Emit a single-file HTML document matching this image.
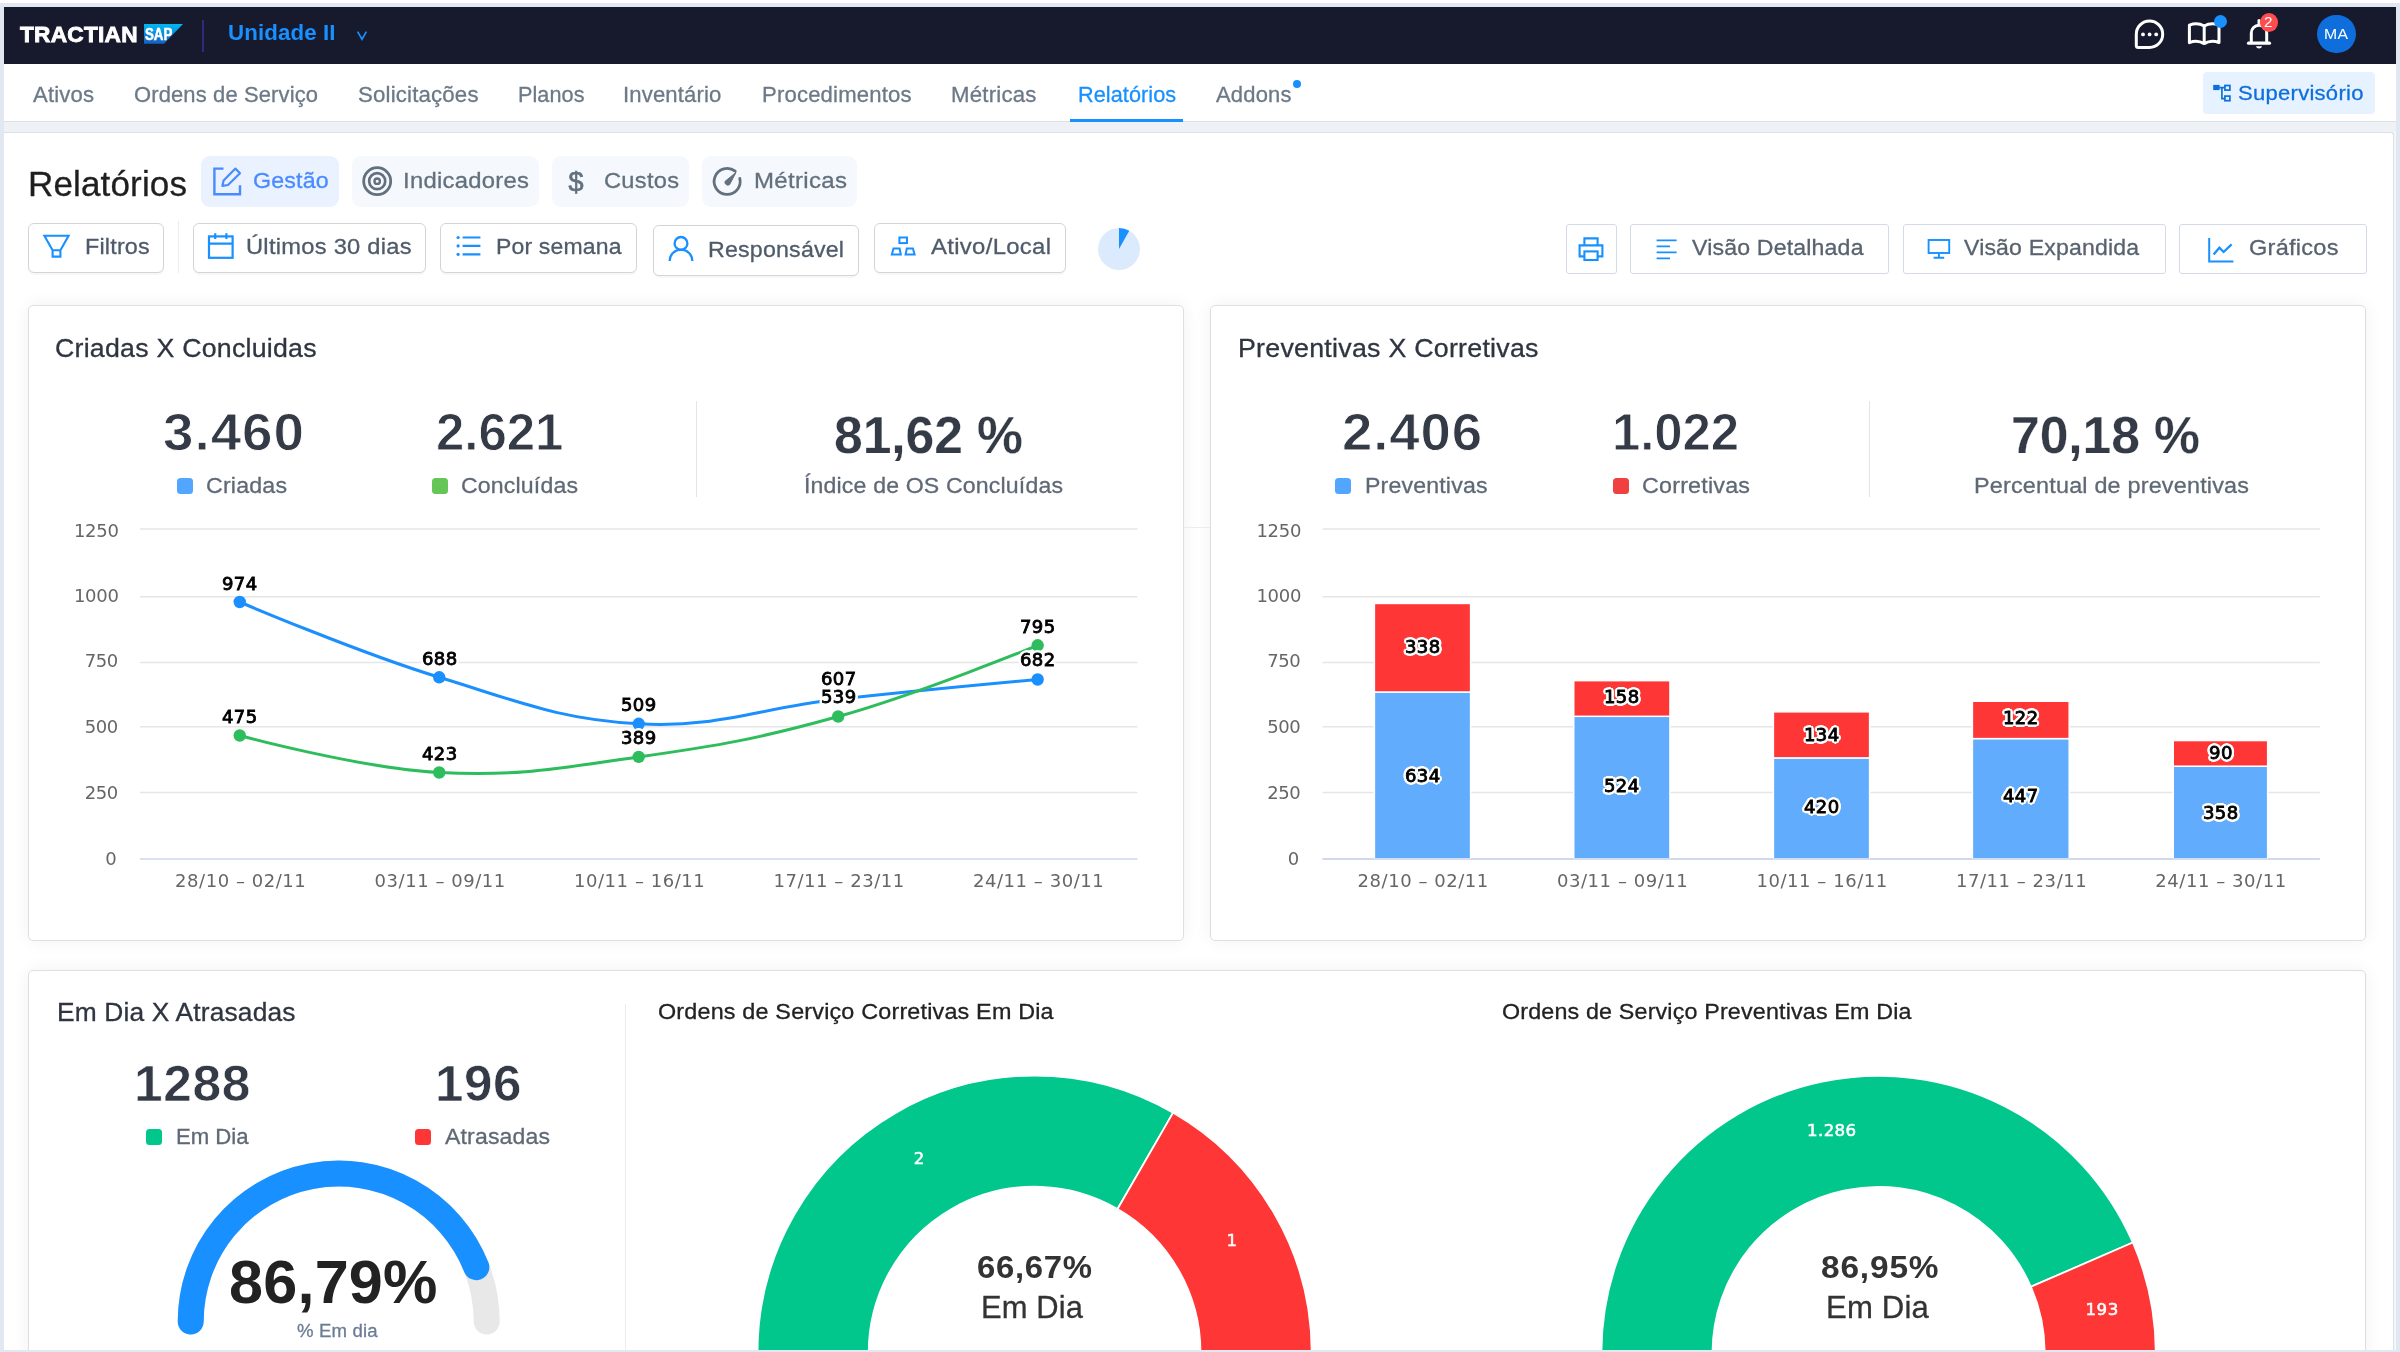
<!DOCTYPE html>
<html lang="pt-BR"><head><meta charset="utf-8"><title>Relatórios</title>
<style>
*{box-sizing:border-box;margin:0;padding:0}
html,body{width:2400px;height:1352px;overflow:hidden}
body{background:#e2e8f1;font-family:"Liberation Sans",sans-serif;position:relative}
div,span,header,nav,main,section,button,svg,h1,h2,i{position:absolute;display:block}
.t{white-space:nowrap;line-height:1;font-weight:400;-webkit-text-stroke:0.3px;transform-origin:0 50%}
button{background:#fff;border:1.5px solid #d4d4d4;border-radius:6px;box-shadow:0 2px 0 rgba(0,0,0,.03);font:inherit}
.pill{border-radius:9px;background:#f5f8fc}
.card{background:#fff;border:1.5px solid #dfdfdf;border-radius:5px;box-shadow:0 0 18px rgba(0,0,0,.06)}
.lg{border-radius:3.5px}
.g{left:0;top:0;width:0;height:0}
.b{-webkit-text-stroke:0}
.wl{-webkit-text-stroke:0.55px #fff}
.dl{-webkit-text-stroke:0.8px #000;font-weight:400;text-shadow:2.60px 0.00px 0 #fff,2.40px 0.99px 0 #fff,1.84px 1.84px 0 #fff,0.99px 2.40px 0 #fff,0.00px 2.60px 0 #fff,-0.99px 2.40px 0 #fff,-1.84px 1.84px 0 #fff,-2.40px 0.99px 0 #fff,-2.60px 0.00px 0 #fff,-2.40px -0.99px 0 #fff,-1.84px -1.84px 0 #fff,-0.99px -2.40px 0 #fff,-0.00px -2.60px 0 #fff,0.99px -2.40px 0 #fff,1.84px -1.84px 0 #fff,2.40px -0.99px 0 #fff,1.60px 0.00px 0 #fff,1.13px 1.13px 0 #fff,0.00px 1.60px 0 #fff,-1.13px 1.13px 0 #fff,-1.60px 0.00px 0 #fff,-1.13px -1.13px 0 #fff,-0.00px -1.60px 0 #fff,1.13px -1.13px 0 #fff}
</style></head>
<body>
<div id="app" style="left:0;top:0;width:2400px;height:1352px;will-change:transform">
<div style="left:0px;top:0px;width:2400px;height:3.3px;background:#fff"></div>
<header class="g">
<div style="left:4px;top:7.2px;width:2392px;height:56.8px;background:#17192d"></div>
<span class="t b" style="top:23.80px;font-size:21.8px;color:#fff;font-weight:700;transform:scaleX(1.0390);letter-spacing:0.256px;left:19.90px;-webkit-text-stroke:0.85px #fff;">TRACTIAN</span>
<svg style="left:144px;top:24px" width="40" height="20" viewBox="0 0 40 20" ><defs><linearGradient id="sg" x1="0" y1="0" x2="0" y2="1"><stop offset="0" stop-color="#00b8f1"/><stop offset=".25" stop-color="#06a5e5"/><stop offset=".6" stop-color="#0d7fd6"/><stop offset="1" stop-color="#1661be"/></linearGradient></defs><path d="M0 0H39L20 19.7H0Z" fill="url(#sg)"/><text x="0.9" y="15.7" font-family="Liberation Sans, sans-serif" font-weight="700" font-size="15.8" fill="#fff" stroke="#fff" stroke-width=".5" textLength="27.4" lengthAdjust="spacingAndGlyphs">SAP</text></svg>
<div style="left:202.4px;top:20px;width:1.6px;height:32px;background:#2d2b7a"></div>
<span class="t b" style="top:21.90px;font-size:21.8px;color:#1890ff;font-weight:700;transform:scaleX(1.0225);letter-spacing:0.109px;left:227.50px;">Unidade II</span>
<svg style="left:356px;top:30px" width="12" height="11" viewBox="0 0 12 11" ><path d="M1.6 1.6L6 9.2L10.4 1.6" fill="none" stroke="#1890ff" stroke-width="1.7"/></svg>
<svg style="left:2132px;top:17px" width="36" height="34" viewBox="0 0 36 34" ><path d="M4.3 17.2A13.2 13.2 0 1 1 17.5 30.4H6.3A2 2 0 0 1 4.3 28.4Z" fill="none" stroke="#fff" stroke-width="3" stroke-linejoin="round"/><circle cx="11" cy="17.4" r="1.9" fill="#fff"/><circle cx="17.6" cy="17.4" r="1.9" fill="#fff"/><circle cx="24.2" cy="17.4" r="1.9" fill="#fff"/></svg>
<svg style="left:2186px;top:20px" width="38" height="28" viewBox="0 0 38 28" ><path d="M3.4 5.2C8 3.4 13.5 3.4 18.2 6C22.9 3.4 28.4 3.4 33 5.2V22.6C28.4 20.8 22.9 20.8 18.2 23.6C13.5 20.8 8 20.8 3.4 22.6Z M18.2 6V23.6" fill="none" stroke="#fff" stroke-width="3" stroke-linejoin="round"/></svg>
<div style="left:2213.9px;top:14.8px;width:13px;height:13px;background:#1890ff;border-radius:50%"></div>
<svg style="left:2244px;top:17px" width="30" height="34" viewBox="0 0 30 34" ><path d="M7.3 25.6V15.9A7.7 7.7 0 0 1 22.7 15.9V25.6" fill="none" stroke="#fff" stroke-width="3"/><path d="M15 7.4V3.6" stroke="#fff" stroke-width="3" stroke-linecap="round"/><path d="M4.5 26.2H25.5" stroke="#fff" stroke-width="3.2" stroke-linecap="round"/><path d="M11.9 29.2A3.2 3.2 0 0 0 18.1 29.2Z" fill="#fff"/></svg>
<div style="left:2259.9px;top:13.2px;width:18.2px;height:19px;background:#ff4d4f;border-radius:50%"></div>
<span class="t b" style="top:14.10px;font-size:15.2px;color:#fff;left:2264.07px;">2</span>
<div style="left:2316.9px;top:14.7px;width:38.7px;height:38.7px;background:#0e6fdc;border-radius:50%"></div>
<span class="t b" style="top:25.70px;font-size:15.3px;color:#fff;transform:scaleX(1.0289);letter-spacing:0.276px;left:2324.25px;">MA</span>
</header>
<nav class="g">
<div style="left:4px;top:64px;width:2392px;height:58px;background:#fff;border-bottom:1.5px solid #dce1e7"></div>
<span class="t" style="top:84.70px;font-size:21.4px;color:#6c7987;transform:scaleX(1.0330);letter-spacing:0.160px;left:33.00px;">Ativos</span>
<span class="t" style="top:84.70px;font-size:21.4px;color:#6c7987;transform:scaleX(1.0270);letter-spacing:0.125px;left:134.00px;">Ordens de Serviço</span>
<span class="t" style="top:84.70px;font-size:21.4px;color:#6c7987;transform:scaleX(1.0390);letter-spacing:0.167px;left:357.50px;">Solicitações</span>
<span class="t" style="top:84.70px;font-size:21.4px;color:#6c7987;transform:scaleX(1.0117);letter-spacing:0.065px;left:517.50px;">Planos</span>
<span class="t" style="top:84.70px;font-size:21.4px;color:#6c7987;transform:scaleX(1.0331);letter-spacing:0.143px;left:623.30px;">Inventário</span>
<span class="t" style="top:84.70px;font-size:21.4px;color:#6c7987;transform:scaleX(1.0334);letter-spacing:0.165px;left:762.00px;">Procedimentos</span>
<span class="t" style="top:84.70px;font-size:21.4px;color:#6c7987;transform:scaleX(1.0405);letter-spacing:0.192px;left:951.30px;">Métricas</span>
<span class="t" style="top:84.70px;font-size:21.4px;color:#1890ff;transform:scaleX(1.0137);letter-spacing:0.062px;left:1077.50px;">Relatórios</span>
<span class="t" style="top:84.70px;font-size:21.4px;color:#6c7987;transform:scaleX(1.0283);letter-spacing:0.171px;left:1215.50px;">Addons</span>
<div style="left:1070px;top:119.2px;width:112.5px;height:2.9px;background:#1890ff"></div>
<div style="left:1293px;top:80px;width:8.4px;height:8.4px;background:#1890ff;border-radius:50%"></div>
<div style="left:2203px;top:72px;width:172px;height:42.1px;background:#e6f2ff;border-radius:4px"></div>
<svg style="left:2212px;top:84px" width="20" height="20" viewBox="0 0 20 20" ><rect x="1.2" y="0.9" width="6.4" height="5.2" fill="#0d6fdc"/><path d="M7.4 3.6H12.4 M9.9 3.6V14.6H12.4" fill="none" stroke="#0d6fdc" stroke-width="1.7"/><rect x="12.9" y="1.5" width="5" height="4.6" fill="none" stroke="#0d6fdc" stroke-width="1.7"/><rect x="12.9" y="12.1" width="5" height="4.6" fill="none" stroke="#0d6fdc" stroke-width="1.7"/></svg>
<span class="t" style="top:83.10px;font-size:20.8px;color:#0d6fdc;transform:scaleX(1.0594);letter-spacing:0.252px;left:2238.00px;">Supervisório</span>
</nav>
<div style="left:4px;top:122px;width:2392px;height:10.5px;background:#eef1f6"></div>
<main class="g">
<div style="left:4px;top:132px;width:2390px;height:1218px;background:#fff;border:1.5px solid #dce1e7;border-bottom:0;border-left:0;border-radius:0 4px 0 0"></div>
<div style="left:2394px;top:132px;width:2px;height:1218px;background:#f4f6fa"></div>
<div class="g">
<span class="t" style="top:166.60px;font-size:34.6px;color:#1f1f1f;transform:scaleX(1.0150);letter-spacing:0.109px;left:28.40px;">Relatórios</span>
<div class="pill" style="left:201.3px;top:156.2px;width:137.5px;height:50.8px;background:#e9f2fe"></div>
<div class="pill" style="left:351.5px;top:156.2px;width:187.6px;height:50.8px;"></div>
<div class="pill" style="left:552px;top:156.2px;width:137px;height:50.8px;"></div>
<div class="pill" style="left:701.5px;top:156.2px;width:155.4px;height:50.8px;"></div>
<svg style="left:211px;top:165px" width="32" height="32" viewBox="0 0 32 32" ><path d="M12.5 3.6H3.4V29.2H29V20.2" fill="none" stroke="#4a8aff" stroke-width="2.4"/><path d="M11.4 20.8L12.6 15.6L24.4 3.6L29 8.2L17 20L11.4 20.8Z" fill="none" stroke="#4a8aff" stroke-width="2.2" stroke-linejoin="round"/></svg>
<span class="t" style="top:169.80px;font-size:22.6px;color:#4a8aff;transform:scaleX(1.0263);letter-spacing:0.160px;left:253.40px;">Gestão</span>
<svg style="left:361px;top:165px" width="32" height="32" viewBox="0 0 32 32" ><circle cx="16.2" cy="16.2" r="13.5" fill="none" stroke="#63707d" stroke-width="2.8"/><circle cx="16.2" cy="16.2" r="8" fill="none" stroke="#63707d" stroke-width="2.7"/><circle cx="16.2" cy="16.2" r="2.7" fill="none" stroke="#63707d" stroke-width="2.4"/></svg>
<span class="t" style="top:169.80px;font-size:22.6px;color:#63707d;transform:scaleX(1.0551);letter-spacing:0.261px;left:403.00px;">Indicadores</span>
<span class="t" style="top:168.60px;font-size:27px;color:#63707d;left:568.50px;-webkit-text-stroke:0.7px;">$</span>
<span class="t" style="top:169.80px;font-size:22.6px;color:#63707d;transform:scaleX(1.0465);letter-spacing:0.268px;left:604.00px;">Custos</span>
<svg style="left:711px;top:165px" width="32" height="32" viewBox="0 0 32 32" ><path d="M24.2 6.2A13 13 0 1 0 28.8 13.4" fill="none" stroke="#63707d" stroke-width="2.8" stroke-linecap="round"/><path d="M14 16.4L25 7.4L18.6 19.6A3 3 0 0 1 14 16.4Z" fill="#63707d" stroke="#63707d" stroke-width="1" stroke-linejoin="round"/></svg>
<span class="t" style="top:169.80px;font-size:22.6px;color:#63707d;transform:scaleX(1.0625);letter-spacing:0.308px;left:753.50px;">Métricas</span>
<button style="left:27.8px;top:222.8px;width:136.6px;height:50.5px;"></button>
<svg style="left:42px;top:233px" width="30" height="27" viewBox="0 0 30 27" ><path d="M2.4 2.8H26.6L18.4 17.2V23.6H10.6V17.2Z M10.6 17.2H18.4" fill="none" stroke="#1890ff" stroke-width="2.1" stroke-linejoin="miter"/></svg>
<span class="t" style="top:236.30px;font-size:22.4px;color:#4f5b6a;transform:scaleX(1.0430);letter-spacing:0.180px;left:84.70px;">Filtros</span>
<div style="left:177.8px;top:221px;width:1.4px;height:51.5px;background:#ececec"></div>
<button style="left:192.5px;top:222.8px;width:233.8px;height:50.5px;"></button>
<svg style="left:206px;top:231px" width="30" height="30" viewBox="0 0 30 30" ><rect x="3" y="5.4" width="23.6" height="21.4" fill="none" stroke="#1890ff" stroke-width="2.2"/><path d="M3 12.6H26.6 M9.2 2.2V8 M20.4 2.2V8" fill="none" stroke="#1890ff" stroke-width="2.2"/></svg>
<span class="t" style="top:236.30px;font-size:22.4px;color:#4f5b6a;transform:scaleX(1.0573);letter-spacing:0.254px;left:246.30px;">Últimos 30 dias</span>
<button style="left:440px;top:222.8px;width:197px;height:50.5px;"></button>
<svg style="left:455px;top:234px" width="28" height="26" viewBox="0 0 28 26" ><path d="M7.6 3.5H25.4 M7.6 11.9H25.4 M7.6 20.3H25.4" stroke="#1890ff" stroke-width="2.2"/><circle cx="3.1" cy="3.5" r="1.6" fill="#1890ff"/><circle cx="3.1" cy="11.9" r="1.6" fill="#1890ff"/><circle cx="3.1" cy="20.3" r="1.6" fill="#1890ff"/></svg>
<span class="t" style="top:236.30px;font-size:22.4px;color:#4f5b6a;transform:scaleX(1.0276);letter-spacing:0.155px;left:495.70px;">Por semana</span>
<button style="left:652.5px;top:225.2px;width:206.5px;height:50.5px;"></button>
<svg style="left:666px;top:234px" width="30" height="30" viewBox="0 0 30 30" ><circle cx="15" cy="9.4" r="6.4" fill="none" stroke="#1890ff" stroke-width="2.3"/><path d="M3.6 27A11.4 11.4 0 0 1 26.4 27" fill="none" stroke="#1890ff" stroke-width="2.3"/></svg>
<span class="t" style="top:238.60px;font-size:22.4px;color:#4f5b6a;transform:scaleX(1.0354);letter-spacing:0.190px;left:707.70px;">Responsável</span>
<button style="left:874.4px;top:222.8px;width:191.2px;height:50.5px;"></button>
<svg style="left:889px;top:234px" width="28" height="26" viewBox="0 0 28 26" ><rect x="10.4" y="3.5" width="7.6" height="5.6" fill="none" stroke="#1890ff" stroke-width="2"/><path d="M2.8 20.5L4.5 14.5H10.6L11.8 20.5Z M16.6 20.5L17.8 14.5H23.9L25.6 20.5Z" fill="none" stroke="#1890ff" stroke-width="2"/></svg>
<span class="t" style="top:236.30px;font-size:22.4px;color:#4f5b6a;transform:scaleX(1.0669);letter-spacing:0.294px;left:930.50px;">Ativo/Local</span>
<svg style="left:1097.3px;top:226.8px" width="44" height="44" viewBox="0 0 44 44" ><circle cx="22" cy="22" r="21" fill="#dbebfd"/><path d="M22 22V1A21 21 0 0 1 32.3 3.7Z" fill="#1890ff"/></svg>
<button style="left:1565.6px;top:223.6px;width:51px;height:50px;border-color:#d5dbe6;border-radius:3px;box-shadow:none"></button>
<svg style="left:1577px;top:235px" width="28" height="28" viewBox="0 0 28 28" ><path d="M7.4 10.4V3.4H20.6V10.4" fill="none" stroke="#1890ff" stroke-width="2.1"/><path d="M7.4 21.4H2.6V10.4H25.4V21.4H20.6" fill="none" stroke="#1890ff" stroke-width="2.1"/><rect x="7.4" y="16.4" width="13.2" height="8.6" fill="none" stroke="#1890ff" stroke-width="2.1"/></svg>
<button style="left:1630px;top:223.6px;width:259.3px;height:50px;border-color:#d5dbe6;border-radius:3px;box-shadow:none"></button>
<svg style="left:1655px;top:237px" width="24" height="24" viewBox="0 0 24 24" ><path d="M1.6 3.4H21.6 M1.6 9.4H15 M1.6 15.4H21.6 M1.6 21.4H15" stroke="#1890ff" stroke-width="1.9"/></svg>
<span class="t" style="top:236.60px;font-size:22.4px;color:#58636f;transform:scaleX(1.0324);letter-spacing:0.157px;left:1691.50px;">Visão Detalhada</span>
<button style="left:1902.8px;top:223.6px;width:263.3px;height:50px;border-color:#d5dbe6;border-radius:3px;box-shadow:none"></button>
<svg style="left:1927px;top:238px" width="26" height="22" viewBox="0 0 26 22" ><rect x="1.6" y="2" width="20.6" height="13" fill="none" stroke="#1890ff" stroke-width="1.9"/><path d="M11.9 15V19.6 M6.6 19.8H17.2" stroke="#1890ff" stroke-width="1.9"/></svg>
<span class="t" style="top:236.60px;font-size:22.4px;color:#58636f;transform:scaleX(1.0307);letter-spacing:0.153px;left:1964.00px;">Visão Expandida</span>
<button style="left:2179.2px;top:223.6px;width:187.4px;height:50px;border-color:#d5dbe6;border-radius:3px;box-shadow:none"></button>
<svg style="left:2207px;top:236px" width="28" height="28" viewBox="0 0 28 28" ><path d="M2.2 2V25.4H26.4" fill="none" stroke="#1890ff" stroke-width="2"/><path d="M6.6 18.6L12.4 11.8L16.6 16L24.6 8.4" fill="none" stroke="#1890ff" stroke-width="2.3"/></svg>
<span class="t" style="top:236.60px;font-size:22.4px;color:#58636f;transform:scaleX(1.0514);letter-spacing:0.250px;left:2248.50px;">Gráficos</span>
</div>
<section class="g">
<div class="card" style="left:27.8px;top:304.6px;width:1156.6px;height:636.6px;"></div>
<span class="t" style="top:336.00px;font-size:25.6px;color:#2f3540;transform:scaleX(1.0438);letter-spacing:0.233px;left:55.00px;">Criadas X Concluidas</span>
<span class="t b" style="top:406.80px;font-size:51.2px;color:#343b47;font-weight:700;transform:scaleX(1.0705);letter-spacing:0.904px;left:163.00px;-webkit-text-stroke:0.9px #fff;">3.460</span>
<span class="t b" style="top:406.80px;font-size:51.2px;color:#343b47;font-weight:700;transform:scaleX(0.9962);letter-spacing:-0.052px;left:435.80px;-webkit-text-stroke:0.9px #fff;">2.621</span>
<div class="lg" style="left:176.5px;top:477.5px;width:16px;height:16px;background:#53a6ff"></div>
<span class="t" style="top:474.60px;font-size:22.4px;color:#5f6976;transform:scaleX(1.0349);letter-spacing:0.186px;left:205.50px;">Criadas</span>
<div class="lg" style="left:431.5px;top:477.5px;width:16px;height:16px;background:#66c557"></div>
<span class="t" style="top:474.60px;font-size:22.4px;color:#5f6976;transform:scaleX(1.0310);letter-spacing:0.161px;left:461.00px;">Concluídas</span>
<div style="left:695.6px;top:400.5px;width:1.4px;height:96px;background:#e3e5e8"></div>
<span class="t b" style="top:408.60px;font-size:52px;color:#343b47;font-weight:700;transform:scaleX(0.9934);letter-spacing:-0.091px;left:834.10px;-webkit-text-stroke:0.25px #fff;">81,62 %</span>
<span class="t" style="top:474.60px;font-size:22.4px;color:#5f6976;transform:scaleX(1.0320);letter-spacing:0.149px;left:803.50px;">Índice de OS Concluídas</span>
<svg style="left:0px;top:500px" width="1200" height="420" viewBox="0 500 1200 420" ><path d="M140 528.9H1137.4" stroke="#e6e6e6" stroke-width="1.5"/><path d="M140 596.7H1137.4" stroke="#e6e6e6" stroke-width="1.5"/><path d="M140 662.5H1137.4" stroke="#e6e6e6" stroke-width="1.5"/><path d="M140 726.8H1137.4" stroke="#e6e6e6" stroke-width="1.5"/><path d="M140 792.6H1137.4" stroke="#e6e6e6" stroke-width="1.5"/><path d="M140 858.9H1137.4" stroke="#ccd6eb" stroke-width="1.5"/><path d="M239.74 602.00C239.74 602.00 359.43 652.94 439.22 677.30C519.01 701.66 558.91 719.40 638.70 723.80C718.49 728.20 758.39 708.16 838.18 699.30C917.97 690.44 1037.66 679.50 1037.66 679.50" fill="none" stroke="#1b8ffd" stroke-width="3" stroke-linejoin="round" stroke-linecap="round"/><circle cx="239.74" cy="602.00" r="6.2" fill="#1b8ffd"/><circle cx="439.22" cy="677.30" r="6.2" fill="#1b8ffd"/><circle cx="638.70" cy="723.80" r="6.2" fill="#1b8ffd"/><circle cx="1037.66" cy="679.50" r="6.2" fill="#1b8ffd"/><path d="M239.74 735.50C239.74 735.50 359.43 768.22 439.22 772.50C519.01 776.78 558.91 768.10 638.70 756.90C718.49 745.70 758.39 738.82 838.18 716.50C917.97 694.18 1037.66 645.30 1037.66 645.30" fill="none" stroke="#2dbd5c" stroke-width="3" stroke-linejoin="round" stroke-linecap="round"/><circle cx="239.74" cy="735.50" r="6.2" fill="#2dbd5c"/><circle cx="439.22" cy="772.50" r="6.2" fill="#2dbd5c"/><circle cx="638.70" cy="756.90" r="6.2" fill="#2dbd5c"/><circle cx="838.18" cy="716.50" r="6.2" fill="#2dbd5c"/><circle cx="1037.66" cy="645.30" r="6.2" fill="#2dbd5c"/></svg>
<span class="t b" style="top:521.70px;font-size:18px;color:#666666;font-family:'DejaVu Sans', 'Liberation Sans', sans-serif;letter-spacing:-0.237px;left:73.90px;">1250</span>
<span class="t b" style="top:586.50px;font-size:18px;color:#666666;font-family:'DejaVu Sans', 'Liberation Sans', sans-serif;letter-spacing:-0.237px;left:73.90px;">1000</span>
<span class="t b" style="top:652.30px;font-size:18px;color:#666666;font-family:'DejaVu Sans', 'Liberation Sans', sans-serif;letter-spacing:-0.530px;left:84.80px;">750</span>
<span class="t b" style="top:718.20px;font-size:18px;color:#666666;font-family:'DejaVu Sans', 'Liberation Sans', sans-serif;letter-spacing:-0.530px;left:84.80px;">500</span>
<span class="t b" style="top:784.20px;font-size:18px;color:#666666;font-family:'DejaVu Sans', 'Liberation Sans', sans-serif;letter-spacing:-0.530px;left:84.80px;">250</span>
<span class="t b" style="top:849.80px;font-size:18px;color:#666666;font-family:'DejaVu Sans', 'Liberation Sans', sans-serif;left:105.25px;">0</span>
<span class="t b" style="top:872.00px;font-size:18px;color:#666666;font-family:'DejaVu Sans', 'Liberation Sans', sans-serif;letter-spacing:0.550px;left:175.04px;">28/10 – 02/11</span>
<span class="t b" style="top:872.00px;font-size:18px;color:#666666;font-family:'DejaVu Sans', 'Liberation Sans', sans-serif;letter-spacing:0.550px;left:374.52px;">03/11 – 09/11</span>
<span class="t b" style="top:872.00px;font-size:18px;color:#666666;font-family:'DejaVu Sans', 'Liberation Sans', sans-serif;letter-spacing:0.550px;left:574.00px;">10/11 – 16/11</span>
<span class="t b" style="top:872.00px;font-size:18px;color:#666666;font-family:'DejaVu Sans', 'Liberation Sans', sans-serif;letter-spacing:0.550px;left:773.48px;">17/11 – 23/11</span>
<span class="t b" style="top:872.00px;font-size:18px;color:#666666;font-family:'DejaVu Sans', 'Liberation Sans', sans-serif;letter-spacing:0.550px;left:972.96px;">24/11 – 30/11</span>
<span class="t dl" style="top:575.50px;font-size:17px;color:#000;font-family:'DejaVu Sans', 'Liberation Sans', sans-serif;transform:scaleX(1.0592);letter-spacing:0.389px;left:222.14px;">974</span>
<span class="t dl" style="top:708.50px;font-size:17px;color:#000;font-family:'DejaVu Sans', 'Liberation Sans', sans-serif;transform:scaleX(1.0592);letter-spacing:0.389px;left:222.14px;">475</span>
<span class="t dl" style="top:650.50px;font-size:17px;color:#000;font-family:'DejaVu Sans', 'Liberation Sans', sans-serif;transform:scaleX(1.0592);letter-spacing:0.389px;left:421.62px;">688</span>
<span class="t dl" style="top:745.50px;font-size:17px;color:#000;font-family:'DejaVu Sans', 'Liberation Sans', sans-serif;transform:scaleX(1.0592);letter-spacing:0.389px;left:421.62px;">423</span>
<span class="t dl" style="top:697.30px;font-size:17px;color:#000;font-family:'DejaVu Sans', 'Liberation Sans', sans-serif;transform:scaleX(1.0592);letter-spacing:0.389px;left:621.10px;">509</span>
<span class="t dl" style="top:729.80px;font-size:17px;color:#000;font-family:'DejaVu Sans', 'Liberation Sans', sans-serif;transform:scaleX(1.0592);letter-spacing:0.389px;left:621.10px;">389</span>
<span class="t dl" style="top:671.00px;font-size:17px;color:#000;font-family:'DejaVu Sans', 'Liberation Sans', sans-serif;transform:scaleX(1.0592);letter-spacing:0.389px;left:820.58px;">607</span>
<span class="t dl" style="top:689.30px;font-size:17px;color:#000;font-family:'DejaVu Sans', 'Liberation Sans', sans-serif;transform:scaleX(1.0592);letter-spacing:0.389px;left:820.58px;">539</span>
<span class="t dl" style="top:652.30px;font-size:17px;color:#000;font-family:'DejaVu Sans', 'Liberation Sans', sans-serif;transform:scaleX(1.0592);letter-spacing:0.389px;left:1020.06px;">682</span>
<span class="t dl" style="top:618.50px;font-size:17px;color:#000;font-family:'DejaVu Sans', 'Liberation Sans', sans-serif;transform:scaleX(1.0592);letter-spacing:0.389px;left:1020.06px;">795</span>
</section>
<section class="g">
<div class="card" style="left:1210.4px;top:304.6px;width:1156px;height:636.6px;"></div>
<div style="left:1184.4px;top:526.6px;width:26px;height:1.5px;background:#ececec"></div>
<span class="t" style="top:336.00px;font-size:25.6px;color:#2f3540;transform:scaleX(1.0469);letter-spacing:0.235px;left:1237.70px;">Preventivas X Corretivas</span>
<span class="t b" style="top:406.80px;font-size:51.2px;color:#343b47;font-weight:700;transform:scaleX(1.0651);letter-spacing:0.838px;left:1341.50px;-webkit-text-stroke:0.9px #fff;">2.406</span>
<span class="t b" style="top:406.80px;font-size:51.2px;color:#343b47;font-weight:700;transform:scaleX(0.9940);letter-spacing:-0.083px;left:1611.50px;-webkit-text-stroke:0.9px #fff;">1.022</span>
<div class="lg" style="left:1335px;top:477.5px;width:16px;height:16px;background:#53a6ff"></div>
<span class="t" style="top:474.60px;font-size:22.4px;color:#5f6976;transform:scaleX(1.0330);letter-spacing:0.160px;left:1364.50px;">Preventivas</span>
<div class="lg" style="left:1612.5px;top:477.5px;width:16px;height:16px;background:#f04040"></div>
<span class="t" style="top:474.60px;font-size:22.4px;color:#5f6976;transform:scaleX(1.0409);letter-spacing:0.191px;left:1642.00px;">Corretivas</span>
<div style="left:1868.8px;top:400.5px;width:1.4px;height:96px;background:#e3e5e8"></div>
<span class="t b" style="top:408.60px;font-size:52px;color:#343b47;font-weight:700;transform:scaleX(0.9934);letter-spacing:-0.091px;left:2011.10px;-webkit-text-stroke:0.25px #fff;">70,18 %</span>
<span class="t" style="top:474.60px;font-size:22.4px;color:#5f6976;transform:scaleX(1.0435);letter-spacing:0.193px;left:1974.00px;">Percentual de preventivas</span>
<svg style="left:1200px;top:500px" width="1200" height="420" viewBox="1200 500 1200 420" ><path d="M1322.5 528.9H2319.8" stroke="#e6e6e6" stroke-width="1.5"/><path d="M1322.5 596.7H2319.8" stroke="#e6e6e6" stroke-width="1.5"/><path d="M1322.5 662.5H2319.8" stroke="#e6e6e6" stroke-width="1.5"/><path d="M1322.5 726.8H2319.8" stroke="#e6e6e6" stroke-width="1.5"/><path d="M1322.5 792.6H2319.8" stroke="#e6e6e6" stroke-width="1.5"/><path d="M1322.5 858.9H2319.8" stroke="#ccd6eb" stroke-width="1.5"/><rect x="1374.40" y="692.00" width="96.2" height="166.90" fill="#62acfd" stroke="#fff" stroke-width="1.5"/><rect x="1374.40" y="603.45" width="96.2" height="88.55" fill="#fe3636" stroke="#fff" stroke-width="1.5"/><rect x="1573.75" y="716.30" width="96.2" height="142.60" fill="#62acfd" stroke="#fff" stroke-width="1.5"/><rect x="1573.75" y="680.65" width="96.2" height="35.65" fill="#fe3636" stroke="#fff" stroke-width="1.5"/><rect x="1773.40" y="757.90" width="96.2" height="101.00" fill="#62acfd" stroke="#fff" stroke-width="1.5"/><rect x="1773.40" y="711.85" width="96.2" height="46.05" fill="#fe3636" stroke="#fff" stroke-width="1.5"/><rect x="1972.40" y="738.60" width="96.8" height="120.30" fill="#62acfd" stroke="#fff" stroke-width="1.5"/><rect x="1972.40" y="701.25" width="96.8" height="37.35" fill="#fe3636" stroke="#fff" stroke-width="1.5"/><rect x="2173.25" y="766.20" width="94.4" height="92.70" fill="#62acfd" stroke="#fff" stroke-width="1.5"/><rect x="2173.25" y="740.55" width="94.4" height="25.65" fill="#fe3636" stroke="#fff" stroke-width="1.5"/><path d="M1322.5 858.9H2319.8" stroke="#ccd6eb" stroke-width="1.5"/></svg>
<span class="t b" style="top:521.70px;font-size:18px;color:#666666;font-family:'DejaVu Sans', 'Liberation Sans', sans-serif;letter-spacing:-0.237px;left:1256.40px;">1250</span>
<span class="t b" style="top:586.50px;font-size:18px;color:#666666;font-family:'DejaVu Sans', 'Liberation Sans', sans-serif;letter-spacing:-0.237px;left:1256.40px;">1000</span>
<span class="t b" style="top:652.30px;font-size:18px;color:#666666;font-family:'DejaVu Sans', 'Liberation Sans', sans-serif;letter-spacing:-0.530px;left:1267.30px;">750</span>
<span class="t b" style="top:718.20px;font-size:18px;color:#666666;font-family:'DejaVu Sans', 'Liberation Sans', sans-serif;letter-spacing:-0.530px;left:1267.30px;">500</span>
<span class="t b" style="top:784.20px;font-size:18px;color:#666666;font-family:'DejaVu Sans', 'Liberation Sans', sans-serif;letter-spacing:-0.530px;left:1267.30px;">250</span>
<span class="t b" style="top:849.80px;font-size:18px;color:#666666;font-family:'DejaVu Sans', 'Liberation Sans', sans-serif;left:1287.75px;">0</span>
<span class="t b" style="top:872.00px;font-size:18px;color:#666666;font-family:'DejaVu Sans', 'Liberation Sans', sans-serif;letter-spacing:0.550px;left:1357.53px;">28/10 – 02/11</span>
<span class="t b" style="top:872.00px;font-size:18px;color:#666666;font-family:'DejaVu Sans', 'Liberation Sans', sans-serif;letter-spacing:0.550px;left:1556.99px;">03/11 – 09/11</span>
<span class="t b" style="top:872.00px;font-size:18px;color:#666666;font-family:'DejaVu Sans', 'Liberation Sans', sans-serif;letter-spacing:0.550px;left:1756.45px;">10/11 – 16/11</span>
<span class="t b" style="top:872.00px;font-size:18px;color:#666666;font-family:'DejaVu Sans', 'Liberation Sans', sans-serif;letter-spacing:0.550px;left:1955.91px;">17/11 – 23/11</span>
<span class="t b" style="top:872.00px;font-size:18px;color:#666666;font-family:'DejaVu Sans', 'Liberation Sans', sans-serif;letter-spacing:0.550px;left:2155.37px;">24/11 – 30/11</span>
<span class="t dl" style="top:767.80px;font-size:17px;color:#000;font-family:'DejaVu Sans', 'Liberation Sans', sans-serif;transform:scaleX(1.0592);letter-spacing:0.389px;left:1404.90px;">634</span>
<span class="t dl" style="top:638.70px;font-size:17px;color:#000;font-family:'DejaVu Sans', 'Liberation Sans', sans-serif;transform:scaleX(1.0592);letter-spacing:0.389px;left:1404.90px;">338</span>
<span class="t dl" style="top:777.80px;font-size:17px;color:#000;font-family:'DejaVu Sans', 'Liberation Sans', sans-serif;transform:scaleX(1.0592);letter-spacing:0.389px;left:1604.25px;">524</span>
<span class="t dl" style="top:689.30px;font-size:17px;color:#000;font-family:'DejaVu Sans', 'Liberation Sans', sans-serif;transform:scaleX(1.0592);letter-spacing:0.389px;left:1604.25px;">158</span>
<span class="t dl" style="top:798.50px;font-size:17px;color:#000;font-family:'DejaVu Sans', 'Liberation Sans', sans-serif;transform:scaleX(1.0592);letter-spacing:0.389px;left:1803.90px;">420</span>
<span class="t dl" style="top:726.90px;font-size:17px;color:#000;font-family:'DejaVu Sans', 'Liberation Sans', sans-serif;transform:scaleX(1.0592);letter-spacing:0.389px;left:1803.90px;">134</span>
<span class="t dl" style="top:787.50px;font-size:17px;color:#000;font-family:'DejaVu Sans', 'Liberation Sans', sans-serif;transform:scaleX(1.0592);letter-spacing:0.389px;left:2003.20px;">447</span>
<span class="t dl" style="top:710.30px;font-size:17px;color:#000;font-family:'DejaVu Sans', 'Liberation Sans', sans-serif;transform:scaleX(1.0592);letter-spacing:0.389px;left:2003.20px;">122</span>
<span class="t dl" style="top:805.10px;font-size:17px;color:#000;font-family:'DejaVu Sans', 'Liberation Sans', sans-serif;transform:scaleX(1.0592);letter-spacing:0.389px;left:2202.85px;">358</span>
<span class="t dl" style="top:745.20px;font-size:17px;color:#000;font-family:'DejaVu Sans', 'Liberation Sans', sans-serif;transform:scaleX(1.0634);letter-spacing:0.553px;left:2208.65px;">90</span>
</section>
<section class="g">
<div class="card" style="left:27.8px;top:969.6px;width:2338.6px;height:420px;"></div>
<span class="t" style="top:1000.00px;font-size:25.6px;color:#2f3540;transform:scaleX(1.0289);letter-spacing:0.162px;left:57.00px;">Em Dia X Atrasadas</span>
<div style="left:624.6px;top:1003.5px;width:1.4px;height:360px;background:#ececee"></div>
<span class="t b" style="top:1058.60px;font-size:49.4px;color:#343b47;font-weight:700;transform:scaleX(1.0416);letter-spacing:0.626px;left:134.00px;-webkit-text-stroke:0.6px #fff;">1288</span>
<span class="t b" style="top:1058.60px;font-size:49.4px;color:#343b47;font-weight:700;transform:scaleX(1.0339);letter-spacing:0.579px;left:435.00px;-webkit-text-stroke:0.6px #fff;">196</span>
<div class="lg" style="left:146px;top:1128.5px;width:16px;height:16px;background:#02c78d"></div>
<span class="t" style="top:1126.00px;font-size:22.4px;color:#5f6976;transform:scaleX(0.9914);letter-spacing:-0.055px;left:176.00px;">Em Dia</span>
<div class="lg" style="left:415px;top:1128.5px;width:16px;height:16px;background:#fe3636"></div>
<span class="t" style="top:1126.00px;font-size:22.4px;color:#5f6976;transform:scaleX(1.0290);letter-spacing:0.152px;left:445.30px;">Atrasadas</span>
<svg style="left:150px;top:1140px" width="380" height="212" viewBox="150 1140 380 212" ><path d="M190.70 1321.60A148 148 0 0 1 486.70 1321.60" fill="none" stroke="#e8e8e8" stroke-width="26" stroke-linecap="round"/><path d="M190.70 1321.60A148 148 0 0 1 476.31 1267.12" fill="none" stroke="#1890ff" stroke-width="26" stroke-linecap="round"/></svg>
<span class="t b" style="top:1252.20px;font-size:60.5px;color:#222;font-weight:700;transform:scaleX(1.0112);letter-spacing:0.196px;left:229.05px;">86,79%</span>
<span class="t" style="top:1321.60px;font-size:18px;color:#6b7c93;transform:scaleX(1.0324);letter-spacing:0.148px;left:297.20px;">% Em dia</span>
<span class="t" style="top:1001.30px;font-size:22.5px;color:#222;transform:scaleX(1.0382);letter-spacing:0.174px;left:657.70px;">Ordens de Serviço Corretivas Em Dia</span>
<span class="t" style="top:1001.30px;font-size:22.5px;color:#222;transform:scaleX(1.0347);letter-spacing:0.160px;left:1501.70px;">Ordens de Serviço Preventivas Em Dia</span>
<svg style="left:640px;top:1060px" width="1720" height="292" viewBox="640 1060 1720 292" ><path d="M757.50 1352.60A277.1 277.1 0 0 1 1173.15 1112.62L1117.55 1208.93A165.9 165.9 0 0 0 868.70 1352.60Z" fill="#02c78d" stroke="#fff" stroke-width="1.8" stroke-linejoin="round"/><path d="M1173.15 1112.62A277.1 277.1 0 0 1 1311.70 1352.60L1200.50 1352.60A165.9 165.9 0 0 0 1117.55 1208.93Z" fill="#fe3636" stroke="#fff" stroke-width="1.8" stroke-linejoin="round"/><path d="M1601.40 1353.00A277.2 277.2 0 0 1 2132.83 1242.51L2030.94 1286.79A166.1 166.1 0 0 0 1712.50 1353.00Z" fill="#02c78d" stroke="#fff" stroke-width="1.8" stroke-linejoin="round"/><path d="M2132.83 1242.51A277.2 277.2 0 0 1 2155.80 1353.00L2044.70 1353.00A166.1 166.1 0 0 0 2030.94 1286.79Z" fill="#fe3636" stroke="#fff" stroke-width="1.8" stroke-linejoin="round"/></svg>
<span class="t wl" style="top:1151.20px;font-size:16.6px;color:#fff;font-family:'DejaVu Sans', 'Liberation Sans', sans-serif;left:913.72px;">2</span>
<span class="t wl" style="top:1233.00px;font-size:16.6px;color:#fff;font-family:'DejaVu Sans', 'Liberation Sans', sans-serif;left:1226.42px;">1</span>
<span class="t wl" style="top:1123.40px;font-size:16.6px;color:#fff;font-family:'DejaVu Sans', 'Liberation Sans', sans-serif;letter-spacing:0.371px;left:1807.10px;">1.286</span>
<span class="t wl" style="top:1302.00px;font-size:16.6px;color:#fff;font-family:'DejaVu Sans', 'Liberation Sans', sans-serif;letter-spacing:0.656px;left:2085.40px;">193</span>
<span class="t b" style="top:1252.30px;font-size:30.5px;color:#333;font-weight:700;transform:scaleX(1.0781);letter-spacing:0.643px;left:976.70px;">66,67%</span>
<span class="t" style="top:1291.70px;font-size:30.5px;color:#333;transform:scaleX(1.0140);letter-spacing:0.118px;left:980.70px;">Em Dia</span>
<span class="t b" style="top:1252.40px;font-size:30.5px;color:#333;font-weight:700;transform:scaleX(1.0957);letter-spacing:0.775px;left:1821.00px;">86,95%</span>
<span class="t" style="top:1291.50px;font-size:30.5px;color:#333;transform:scaleX(1.0203);letter-spacing:0.171px;left:1825.55px;">Em Dia</span>
</section>
</main>
<div style="left:0px;top:1350px;width:2400px;height:2px;background:#e2e8f1"></div>
<div style="left:0px;top:7px;width:4px;height:1345px;background:#e2e8f1"></div>
<div style="left:2396px;top:7px;width:4px;height:1345px;background:#e2e8f1"></div>
</div>
</body></html>
